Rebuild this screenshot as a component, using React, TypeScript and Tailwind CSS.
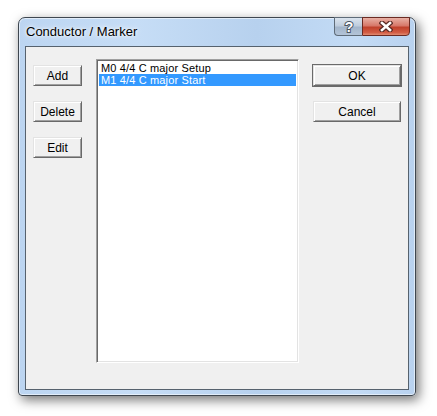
function WinButton({ label, wide, isDefault }: { label: string; wide?: boolean; isDefault?: boolean }) {
  return (
    <button
      className={`${wide ? "w-[88px]" : "w-[49px]"} h-[21px] flex items-center justify-center bg-[#f0f0f0] text-[12px] leading-none text-black border border-t-[#e3e3e3] border-l-[#e3e3e3] border-b-[#696969] border-r-[#696969] shadow-[inset_1px_1px_0_#ffffff,inset_-1px_-1px_0_#a0a0a0] ${isDefault ? "outline outline-1 outline-[#6a6a6a]" : ""}`}
    >
      {label}
    </button>
  );
}

export default function App() {
  const markers = [
    { id: 0, text: "M0 4/4 C major Setup", selected: false },
    { id: 1, text: "M1 4/4 C major Start", selected: true },
  ];

  return (
    <div className="w-[437px] h-[416px] bg-white pl-[18px] pt-[17px] font-['Liberation_Sans',sans-serif]">
      {/* Window frame */}
      <div className="w-[398px] h-[379px] flex flex-col rounded-t-[7px] rounded-b-[4px] border border-[#3f4750] bg-[linear-gradient(90deg,#bcd5f1_0%,#c6ddf6_30%,#b7d1ee_60%,#c3dbf5_85%,#b9d2ef_100%)] shadow-[inset_0_0_0_1px_rgba(255,255,255,0.55),3px_4px_12px_rgba(0,0,0,0.55)]">
        {/* Title bar */}
        <div className="h-[28px] flex justify-between shrink-0">
          <span className="self-center pl-[7px] text-[13px] text-black [text-shadow:0_0_6px_#ffffff,0_0_3px_#ffffff]">
            Conductor / Marker
          </span>
          <div className="flex self-start -mt-px mr-[5px]">
            <div className="w-[28px] h-[19px] flex items-center justify-center rounded-bl-[4px] border border-r-0 border-[#5e6b78] bg-[linear-gradient(180deg,#dbe4ee_0%,#bfcddd_45%,#a3b5ca_55%,#b3c4d8_100%)]">
              <svg width="12" height="14" viewBox="0 0 12 14">
                <text x="6" y="12" textAnchor="middle" fontSize="14" fontWeight="bold" fontFamily="Liberation Sans, sans-serif" fill="#ffffff" stroke="#4b5563" strokeWidth="2" paintOrder="stroke">?</text>
              </svg>
            </div>
            <div className="w-[48px] h-[19px] flex items-center justify-center rounded-br-[4px] border border-[#6b2a22] bg-[linear-gradient(180deg,#e8b0a4_0%,#d7786a_45%,#c0412c_55%,#d25c44_85%,#e08a70_100%)]">
              <svg width="14" height="11" viewBox="0 0 14 11">
                <path d="M3 2 L11 9 M11 2 L3 9" stroke="#5a2a24" strokeWidth="5" strokeLinecap="square" fill="none" />
                <path d="M3 2 L11 9 M11 2 L3 9" stroke="#ffffff" strokeWidth="2.6" strokeLinecap="square" fill="none" />
              </svg>
            </div>
          </div>
        </div>

        {/* Client area */}
        <div className="flex-1 mx-[6px] mb-[5px] border border-[#56626e] bg-[#f0f0f0] flex pl-[7px] pt-[12px]">
          <div className="flex flex-col gap-[15px] mt-[6px]">
            <WinButton label="Add" />
            <WinButton label="Delete" />
            <WinButton label="Edit" />
          </div>

          {/* Marker list */}
          <div className="ml-[14px] w-[203px] h-[304px] bg-white border border-t-[#a0a0a0] border-l-[#a0a0a0] border-b-white border-r-white shadow-[inset_1px_1px_0_#696969,inset_-1px_-1px_0_#e3e3e3] p-[2px] flex flex-col">
            {markers.map((m) => (
              <div
                key={m.id}
                className={`h-[12px] pl-[2px] text-[11px] tracking-[0.15px] leading-[12px] whitespace-nowrap ${m.selected ? "bg-[#3399ff] text-white" : "text-black"}`}
              >
                {m.text}
              </div>
            ))}
          </div>

          <div className="flex flex-col gap-[15px] mt-[6px] ml-[14px]">
            <WinButton label="OK" wide isDefault />
            <WinButton label="Cancel" wide />
          </div>
        </div>
      </div>
    </div>
  );
}
